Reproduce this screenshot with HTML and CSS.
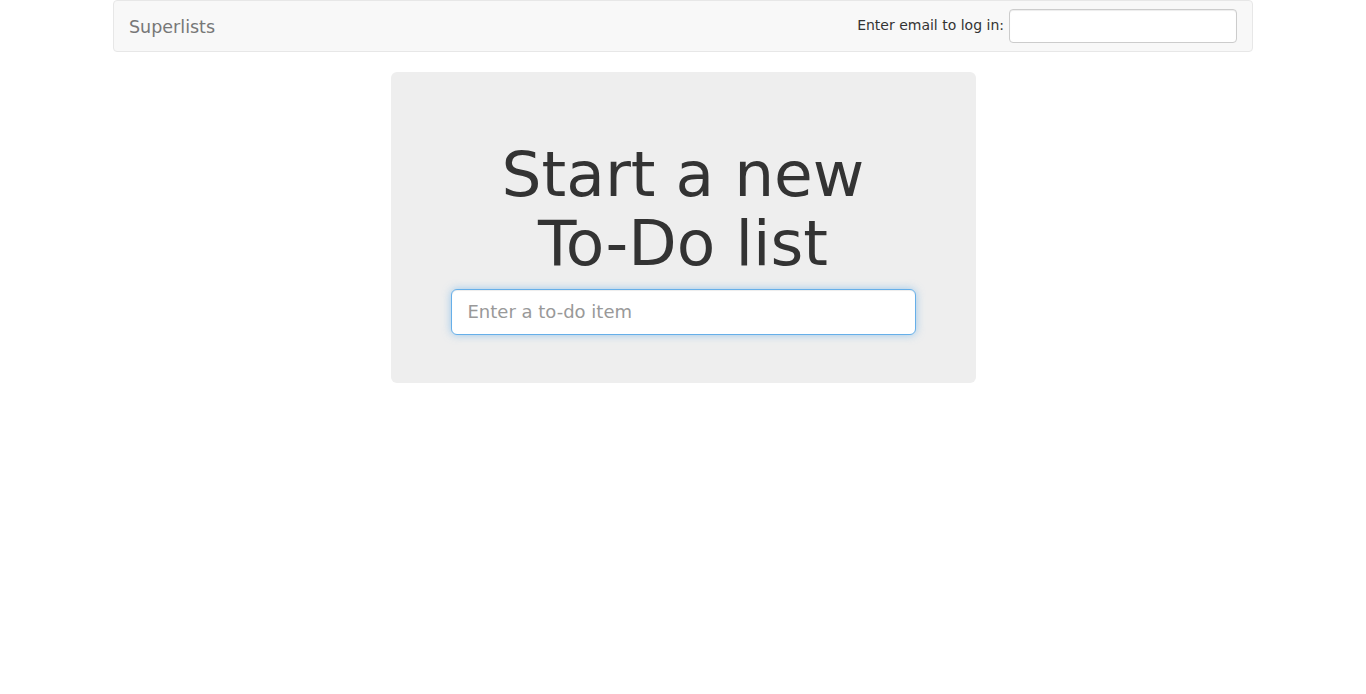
FILE: index.html
```html
<!DOCTYPE html>
<html>
<head>
<meta charset="utf-8">
<title>To-Do lists</title>
<link rel="stylesheet" href="styles.css">
</head>
<body>
<div class="container">
  <nav class="navbar">
    <a class="brand" href="#">Superlists</a>
    <form class="login-form">
      <label class="login-label">Enter email to log in:</label>
      <input class="login-input" type="text" name="email">
    </form>
  </nav>
  <div class="jumbotron">
    <h1 class="title">Start a new<br>To-Do list</h1>
    <form class="item-form">
      <input class="item-input" type="text" placeholder="Enter a to-do item">
    </form>
  </div>
</div>
</body>
</html>
```

FILE: styles.css
```css
* { box-sizing: border-box; }
html, body { margin: 0; padding: 0; }
body {
  font-family: "DejaVu Sans", sans-serif;
  font-size: 14px;
  line-height: 1.42857;
  color: #333;
  background: #fff;
}
.container {
  width: 1140px;
  margin: 0 auto;
}
.navbar {
  display: flex;
  align-items: flex-start;
  justify-content: space-between;
  height: 52px;
  background: #f8f8f8;
  border: 1px solid #e7e7e7;
  border-radius: 4px;
  margin-bottom: 20px;
}
.brand {
  padding: 16px 15px 14px;
  font-size: 17.5px;
  line-height: 20px;
  height: 50px;
  color: #777;
  text-decoration: none;
}
.login-form {
  display: flex;
  align-items: center;
  margin: 8px 15px 0 0;
  height: 34px;
}
.login-label {
  font-size: 14px;
  margin-right: 5px;
  color: #333;
}
.login-input {
  width: 228px;
  height: 34px;
  padding: 6px 12px;
  font-family: inherit;
  font-size: 14px;
  border: 1px solid #ccc;
  border-radius: 4px;
  box-shadow: inset 0 1px 1px rgba(0,0,0,.075);
  background: #fff;
  outline: none;
}
.jumbotron {
  width: 585px;
  margin: 0 auto;
  padding: 48px 60px;
  background: #eee;
  border-radius: 6px;
  text-align: center;
}
.title {
  margin: 20px 0 10px;
  font-size: 63px;
  font-weight: 500;
  line-height: 1.1;
  color: #333;
}
.item-form { margin: 0; }
.item-input {
  display: block;
  width: 100%;
  height: 46px;
  padding: 10px 16px;
  font-family: inherit;
  font-size: 18px;
  line-height: 1.33;
  color: #555;
  background: #fff;
  border: 1px solid #66afe9;
  border-radius: 6px;
  box-shadow: inset 0 1px 1px rgba(0,0,0,.075), 0 0 8px rgba(102,175,233,.6);
  outline: none;
}
.item-input::placeholder { color: #999; }
```
